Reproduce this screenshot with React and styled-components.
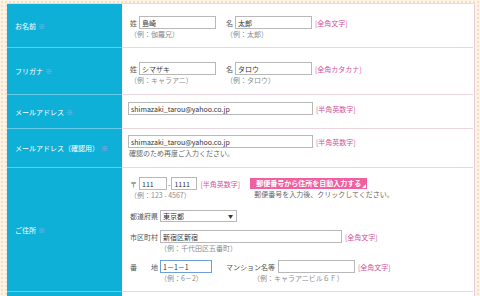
import React from 'react';
import styled, { createGlobalStyle } from 'styled-components';

const GlobalStyle = createGlobalStyle`
  html, body {
    margin: 0;
    padding: 0;
  }
  body {
    background-color: #fcf3e3;
    background-image: radial-gradient(#f4dfcf 0.7px, transparent 1px);
    background-size: 4px 4px;
    font-family: "Noto Sans CJK JP", "Noto Sans", sans-serif;
    font-size: 7px;
    color: #555;
  }
`;

const Table = styled.div`
  display: grid;
  grid-template-columns: 115px 351px;
  grid-template-rows: 44px 47px 34px 39px 124px 40px;
  width: 467px;
  margin: 3px 0 0 7px;
  border-top: 1px solid #eed7df;
  border-right: 1px solid #ebcfd8;
  background: #fff;
`;

const LabelCell = styled.div`
  display: flex;
  align-items: center;
  box-sizing: border-box;
  padding-left: 8px;
  background: #0fb0d8;
  border-bottom: 1px solid #66cbe6;
  color: #fff;
  font-size: 7px;
  line-height: 10px;
`;

const Mark = styled.span`
  color: #aaa6ec;
  margin-left: 2px;
`;

const FieldCell = styled.div`
  box-sizing: border-box;
  padding: ${p => p.$top}px 0 0 6px;
  border-bottom: 1px solid #ecd6de;
`;

const Line = styled.div`
  display: flex;
  align-items: center;
  height: 13px;
`;

const Groups = styled.div`
  display: flex;
  gap: 10px;
  padding-left: 2px;
`;

const Group = styled.div`
  display: flex;
  flex-direction: column;
`;

const Caption = styled.span`
  color: #555;
  margin-right: ${p => p.$gap ?? 2}px;
`;

const FixedCaption = styled.span`
  display: inline-block;
  width: 28px;
  margin-right: 2px;
  text-align: justify;
  text-align-last: justify;
  color: #555;
`;

const TextInput = styled.input`
  box-sizing: border-box;
  width: ${p => p.$w}px;
  height: 13px;
  margin: 0;
  padding: 0 2px;
  border: 1px solid ${p => (p.$focus ? '#6f9fd6' : '#b8b8b8')};
  border-radius: 0;
  background: #fff;
  font-family: "Noto Sans CJK JP", "Noto Sans", sans-serif;
  font-size: 7px;
  color: #333;
  outline: none;
`;

const Rule = styled.span`
  color: #d2549a;
  margin-left: 3px;
  white-space: nowrap;
`;

const Hint = styled.div`
  color: #8c8c8c;
  line-height: 10px;
  padding-left: ${p => p.$indent ?? 0}px;
  white-space: nowrap;
`;

const Note = styled.div`
  color: #666;
  line-height: 10px;
  padding-left: ${p => p.$indent ?? 0}px;
  white-space: nowrap;
`;

const Address = styled.div`
  display: flex;
  flex-direction: column;
  padding-left: 2px;
`;

const ZipRow = styled.div`
  display: flex;
  align-items: flex-start;
  gap: 10px;
`;

const Dash = styled.span`
  margin: 0 1px;
  color: #555;
`;

const AutoButton = styled.button`
  position: relative;
  box-sizing: border-box;
  width: 117px;
  height: 11px;
  margin-top: 1px;
  padding: 0;
  border: none;
  background: #f0609f;
  color: #fff;
  font-family: "Noto Sans CJK JP", "Noto Sans", sans-serif;
  font-size: 7px;
  font-weight: bold;
  line-height: 11px;
  text-align: center;
  &::after {
    content: '';
    position: absolute;
    right: 1px;
    bottom: 1px;
    border-style: solid;
    border-width: 0 0 4px 4px;
    border-color: transparent transparent #fff transparent;
  }
`;

const Block = styled.div`
  display: flex;
  flex-direction: column;
  margin-top: ${p => p.$mt ?? 0}px;
  margin-left: ${p => p.$ml ?? 0}px;
`;

const SelectWrap = styled.div`
  position: relative;
  width: 77px;
  height: 12px;
  &::after {
    content: '▼';
    position: absolute;
    right: 4px;
    top: 0;
    font-size: 5px;
    line-height: 12px;
    color: #333;
    pointer-events: none;
  }
`;

const Select = styled.select`
  box-sizing: border-box;
  width: 100%;
  height: 12px;
  margin: 0;
  padding: 0 2px;
  border: 1px solid #b8b8b8;
  border-radius: 0;
  background: #fff;
  appearance: none;
  font-family: "Noto Sans CJK JP", "Noto Sans", sans-serif;
  font-size: 7px;
  color: #333;
`;

const Split = styled.div`
  display: flex;
  align-items: flex-start;
`;

const Req = () => <Mark>※</Mark>;

export default function App() {
  return (
    <>
      <GlobalStyle />
      <Table>
        <LabelCell>お名前<Req /></LabelCell>
        <FieldCell $top={12}>
          <Groups>
            <Group>
              <Line>
                <Caption>姓</Caption>
                <TextInput $w={77} defaultValue="島崎" />
              </Line>
              <Hint>（例：伽羅兄）</Hint>
            </Group>
            <Group>
              <Line>
                <Caption>名</Caption>
                <TextInput $w={77} defaultValue="太郎" />
                <Rule>[全角文字]</Rule>
              </Line>
              <Hint>（例：太郎）</Hint>
            </Group>
          </Groups>
        </FieldCell>

        <LabelCell>フリガナ<Req /></LabelCell>
        <FieldCell $top={14}>
          <Groups>
            <Group>
              <Line>
                <Caption>姓</Caption>
                <TextInput $w={77} defaultValue="シマザキ" />
              </Line>
              <Hint>（例：キャラアニ）</Hint>
            </Group>
            <Group>
              <Line>
                <Caption>名</Caption>
                <TextInput $w={77} defaultValue="タロウ" />
                <Rule>[全角カタカナ]</Rule>
              </Line>
              <Hint>（例：タロウ）</Hint>
            </Group>
          </Groups>
        </FieldCell>

        <LabelCell>メールアドレス<Req /></LabelCell>
        <FieldCell $top={7}>
          <Line>
            <TextInput $w={185} defaultValue="shimazaki_tarou@yahoo.co.jp" />
            <Rule>[半角英数字]</Rule>
          </Line>
        </FieldCell>

        <LabelCell>メールアドレス（確認用）<Req /></LabelCell>
        <FieldCell $top={6}>
          <Line>
            <TextInput $w={185} defaultValue="shimazaki_tarou@yahoo.co.jp" />
            <Rule>[半角英数字]</Rule>
          </Line>
          <Note $indent={1}>確認のため再度ご入力ください。</Note>
        </FieldCell>

        <LabelCell>ご住所<Req /></LabelCell>
        <FieldCell $top={9}>
          <Address>
            <ZipRow>
              <Block>
                <Line>
                  <Caption $gap={2}>〒</Caption>
                  <TextInput $w={28} defaultValue="111" />
                  <Dash>-</Dash>
                  <TextInput $w={26} defaultValue="1111" />
                  <Rule>[半角英数字]</Rule>
                </Line>
                <Hint>（例：123 - 4567）</Hint>
              </Block>
              <Block>
                <AutoButton type="button">郵便番号から住所を自動入力する</AutoButton>
                <Note $indent={4}>郵便番号を入力後、クリックしてください。</Note>
              </Block>
            </ZipRow>

            <Block $mt={9}>
              <Line>
                <FixedCaption>都道府県</FixedCaption>
                <SelectWrap>
                  <Select defaultValue="東京都">
                    <option>東京都</option>
                  </Select>
                </SelectWrap>
              </Line>
            </Block>

            <Block $mt={8}>
              <Line>
                <FixedCaption>市区町村</FixedCaption>
                <TextInput $w={182} defaultValue="新宿区新宿" />
                <Rule>[全角文字]</Rule>
              </Line>
              <Hint $indent={30}>（例：千代田区五番町）</Hint>
            </Block>

            <Split>
              <Block $mt={7}>
                <Line>
                  <FixedCaption>番地</FixedCaption>
                  <TextInput $w={52} $focus defaultValue="1－1－1" />
                </Line>
                <Hint $indent={30}>（例：6－2）</Hint>
              </Block>
              <Block $mt={7} $ml={14}>
                <Line>
                  <Caption $gap={3}>マンション名等</Caption>
                  <TextInput $w={77} />
                  <Rule>[全角文字]</Rule>
                </Line>
                <Hint $indent={27}>（例：キャラアニビル６Ｆ）</Hint>
              </Block>
            </Split>
          </Address>
        </FieldCell>

        <LabelCell />
        <FieldCell $top={9} />
      </Table>
    </>
  );
}
